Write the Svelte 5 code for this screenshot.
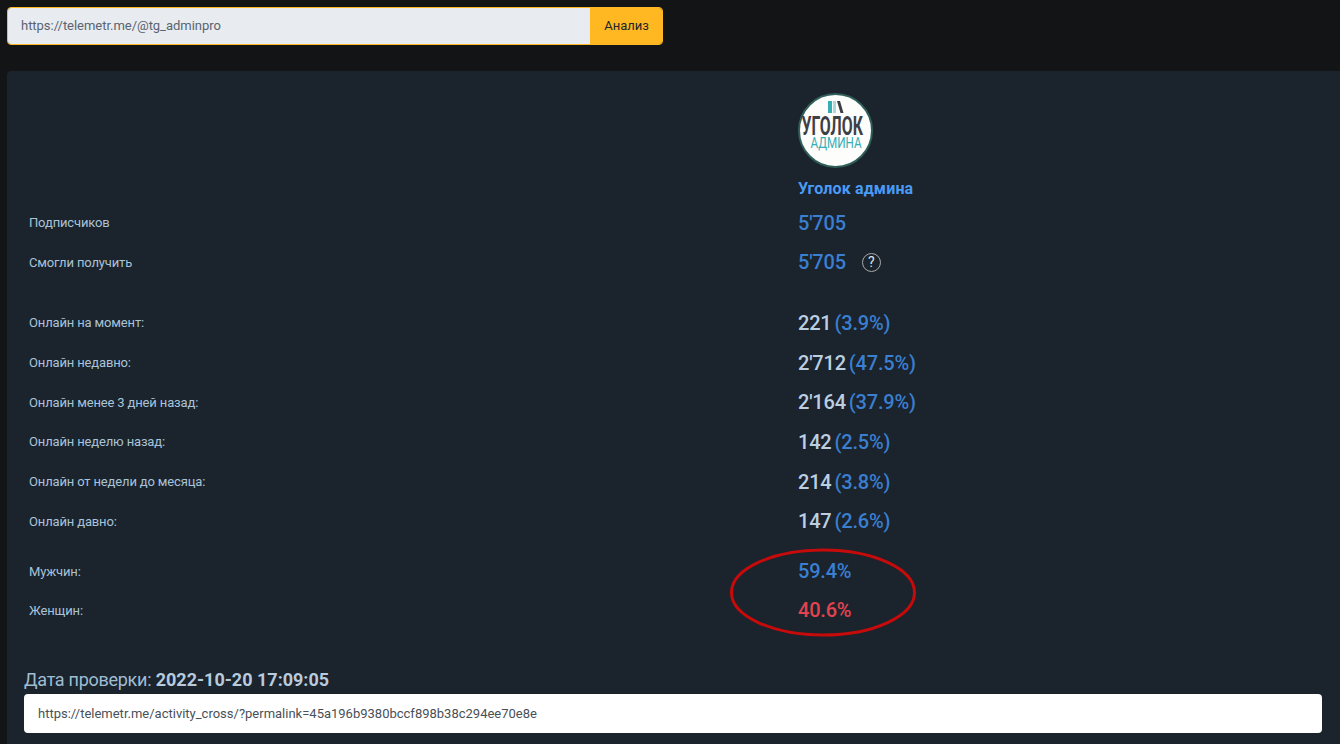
<script>
  const groups = [
    { cls: 'g1', rows: [
      { label: 'Подписчиков', kind: 'blue', main: "5'705" },
      { label: 'Смогли получить', kind: 'blue', main: "5'705", help: true }
    ]},
    { cls: 'g2', rows: [
      { label: 'Онлайн на момент:', main: '221', pct: '(3.9%)' },
      { label: 'Онлайн недавно:', main: "2'712", pct: '(47.5%)' },
      { label: 'Онлайн менее 3 дней назад:', main: "2'164", pct: '(37.9%)' },
      { label: 'Онлайн неделю назад:', main: '142', pct: '(2.5%)' },
      { label: 'Онлайн от недели до месяца:', main: '214', pct: '(3.8%)' },
      { label: 'Онлайн давно:', main: '147', pct: '(2.6%)' }
    ]},
    { cls: 'g3', rows: [
      { label: 'Мужчин:', kind: 'blue', main: '59.4%' },
      { label: 'Женщин:', kind: 'red', main: '40.6%' }
    ]}
  ];
</script>

<div class="page">
  <div class="search">
    <div class="input">https://telemetr.me/@tg_adminpro</div>
    <div class="btn">Анализ</div>
  </div>

  <section class="panel">
    <div class="head">
      <svg class="logo" width="75" height="75" viewBox="0 0 75 75">
        <circle cx="37.5" cy="37.5" r="36.5" fill="#fdfdfb" stroke="#2f5f58" stroke-width="2" />
        <rect x="30" y="8" width="4" height="12" fill="#35aeb4" />
        <rect x="35" y="8" width="3" height="12" fill="#a9d9db" />
        <path d="M39 8h3l3.500 12h-3z" fill="#3a3d42" />
        <text transform="translate(3.500 42) scale(.635 1)" class="l1">УГОЛОК</text>
        <text transform="translate(12.500 55) scale(.78 1)" class="l2">АДМИНА</text>
      </svg>
      <div class="name">Уголок админа</div>
    </div>

    {#each groups as g}
      <div class="group {g.cls}">
        {#each g.rows as r}
          <div class="row">
            <div class="label">{r.label}</div>
            <div class="value">
              <span class="main {r.kind ?? ''}">{r.main}</span>
              {#if r.pct}<span class="pct">{r.pct}</span>{/if}
              {#if r.help}<span class="help">?</span>{/if}
            </div>
          </div>
        {/each}
      </div>
    {/each}

    <svg class="ellipse" width="190" height="90" viewBox="0 0 190 90">
      <ellipse cx="95" cy="44.500" rx="91.500" ry="42.500" fill="none" stroke="#c70a0a" stroke-width="3" />
    </svg>

    <div class="date"><span class="date-label">Дата проверки:</span> <b>2022-10-20 17:09:05</b></div>
    <div class="link">https://telemetr.me/activity_cross/?permalink=45a196b9380bccf898b38c294ee70e8e</div>
  </section>
</div>

<style>
  :global(body) {
    margin: 0;
    background: #121416;
  }
  .page {
    height: 744px;
    overflow: hidden;
    box-sizing: border-box;
    padding: 7px 0 0 7px;
    font-family: Roboto, "Liberation Sans", sans-serif;
  }
  .search {
    display: flex;
    width: 656px;
    height: 38px;
    box-sizing: border-box;
    border: 1px solid #ffb822;
    border-radius: 4px;
    overflow: hidden;
    font-size: 13px;
  }
  .input {
    flex: 1;
    background: #e8ebef;
    color: #5a6470;
    padding-left: 13px;
    line-height: 35px;
    letter-spacing: -0.03px;
  }
  .btn {
    width: 72px;
    background: #ffb822;
    color: #212529;
    text-align: center;
    line-height: 35px;
    padding-left: 1px;
    box-sizing: border-box;
  }
  .panel {
    position: relative;
    margin-top: 26px;
    height: 673px;
    background: #1b232d;
    border-radius: 4px 0 0 0;
    padding: 22px 0 0 22px;
    box-sizing: border-box;
  }
  .head {
    margin-left: 769px;
    height: 110px;
  }
  .logo {
    display: block;
  }
  .l1 {
    font: 700 25px "Roboto", sans-serif;
    fill: #3d4045;
  }
  .l2 {
    font: 400 15px "Roboto", sans-serif;
    fill: #35aeb4;
  }
  .name {
    margin-top: 11px;
    font-size: 16px;
    line-height: 19px;
    font-weight: 700;
    letter-spacing: 0.15px;
    color: #4a9bf5;
  }
  .group {
    display: flex;
    flex-direction: column;
  }
  .g2 { margin-top: 20.9px; }
  .g3 { margin-top: 10.5px; }
  .row {
    display: flex;
    align-items: center;
    height: 39.65px;
  }
  .g3 .row {
    height: 39px;
  }
  .label {
    width: 769px;
    flex: none;
    font-size: 13px;
    letter-spacing: -0.15px;
    color: #a9c4d8;
  }
  .value {
    display: flex;
    align-items: center;
    font-size: 20px;
    font-weight: 500;
    letter-spacing: -0.2px;
    color: #bccfe0;
  }
  .main.blue { color: #3a7fd0; }
  .main.red { color: #e2434f; }
  .pct {
    margin-left: 3px;
    color: #3a7fd0;
  }
  .help {
    margin-left: 16px;
    width: 17px;
    height: 17px;
    border: 1px solid #a8a8a8;
    border-radius: 50%;
    font-size: 14px;
    font-weight: 400;
    line-height: 17px;
    text-align: center;
    color: #dfe6ee;
  }
  .ellipse {
    position: absolute;
    left: 721px;
    top: 477px;
  }
  .date {
    position: absolute;
    left: 17px;
    top: 598px;
    font-size: 18px;
    line-height: 22px;
    color: #9fbdd2;
  }
  .date-label {
    letter-spacing: -0.28px;
  }
  .date b {
    font-weight: 700;
    color: #b7cbdd;
  }
  .link {
    position: absolute;
    left: 17px;
    top: 623px;
    width: 1298px;
    height: 39px;
    box-sizing: border-box;
    background: #fff;
    border-radius: 4px;
    padding-left: 14px;
    font-size: 13px;
    line-height: 39px;
    color: #495057;
  }
</style>
